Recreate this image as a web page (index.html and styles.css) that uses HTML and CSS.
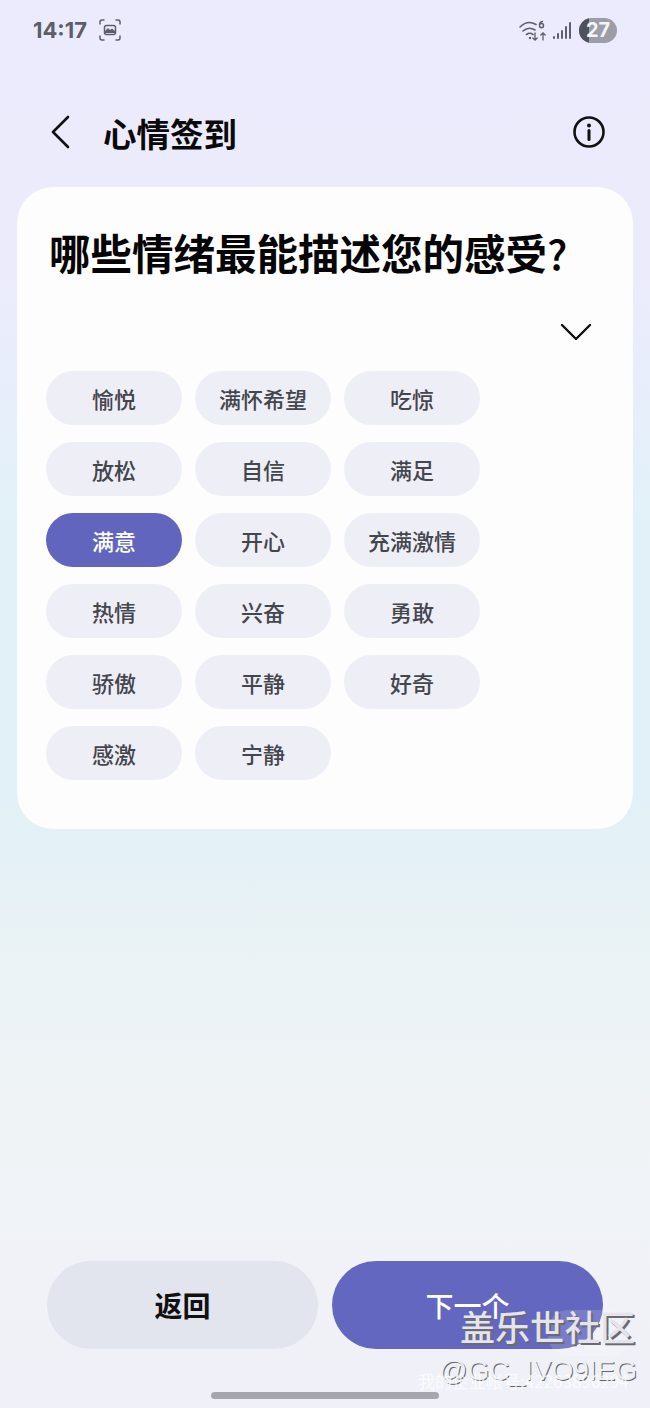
FILE: index.html
```html
<!DOCTYPE html>
<html lang="zh-CN">
<head>
<meta charset="utf-8">
<title>心情签到</title>
<link rel="stylesheet" href="styles.css">
</head>
<body>
<div class="screen">
  <div class="status">
    <div class="status-left">
      <span class="time">14:17</span>
      <svg class="shot" width="22" height="22" viewBox="0 0 22 22" fill="none" stroke="#5c5f6b" stroke-width="1.5" stroke-linecap="round">
        <path d="M1 5V3a2 2 0 0 1 2-2h2M17 1h2a2 2 0 0 1 2 2v2M21 17v2a2 2 0 0 1-2 2h-2M5 21H3a2 2 0 0 1-2-2v-2"/>
        <rect x="5.5" y="6.5" width="11" height="9" rx="2"/>
        <path d="M6 12l3-3 2 2 2-1.500 3 2.500v2H6z" fill="#5c5f6b" stroke="none"/>
      </svg>
    </div>
    <div class="status-right">
      <svg class="wifi" width="28" height="22" viewBox="0 0 28 22" fill="none" stroke="#5c5f6b" stroke-width="1.6" stroke-linecap="round">
        <path d="M1 7c5-5 11-5.500 16-2.500M4 11c4-3.500 8-3.500 12-1M7.500 14.500c2-1.500 4.500-1.500 6.500 0"/>
        <circle cx="11" cy="18" r="1.200" fill="#5c5f6b" stroke="none"/>
        <path d="M16 13v7M13.800 18l2.200 2.200 2.200-2.200M24 20v-7M21.800 15l2.200-2.200 2.200 2.200" stroke-width="1.300"/>
        <path d="M23.500 1.500c-2 .2-3 1.700-3 3.800 0 1.500.8 2.500 2 2.500s2-1 2-2.200-.8-2-2-2-1.700.6-2 1.300" stroke-width="1.500"/>
      </svg>
      <svg class="signal" width="18" height="17" viewBox="0 0 18 17" fill="#5c5f6b">
        <rect x="0" y="14" width="2" height="3" rx="1"/>
        <rect x="4" y="11" width="2" height="6" rx="1"/>
        <rect x="8" y="8" width="2" height="9" rx="1"/>
        <rect x="12" y="4" width="2" height="13" rx="1"/>
        <rect x="16" y="0" width="2" height="17" rx="1"/>
      </svg>
      <div class="battery"><span class="battery-fill"></span><span class="battery-num">27</span></div>
    </div>
  </div>

  <header class="topbar">
    <div class="topbar-left">
      <svg class="back" width="20" height="34" viewBox="0 0 20 34" fill="none" stroke="#111" stroke-width="2.600" stroke-linecap="round" stroke-linejoin="round">
        <path d="M18 2L3 17l15 15"/>
      </svg>
      <h1 class="title">心情签到</h1>
    </div>
    <svg class="info" width="32" height="32" viewBox="0 0 32 32" fill="none" stroke="#111" stroke-width="2.600" stroke-linecap="round">
      <circle cx="16" cy="16" r="14.500"/>
      <path d="M16 14.500v9" stroke-width="3"/>
      <circle cx="16" cy="9.500" r="2" fill="#111" stroke="none"/>
    </svg>
  </header>

  <main class="card">
    <h2 class="question">哪些情绪最能描述您的感受<span class="q-mark">?</span></h2>
    <div class="chev-row">
      <svg width="32" height="18" viewBox="0 0 32 18" fill="none" stroke="#111" stroke-width="2.400" stroke-linecap="round" stroke-linejoin="round">
        <path d="M2 2l14 14L30 2"/>
      </svg>
    </div>
    <div class="chips">
      <span class="chip">愉悦</span><span class="chip">满怀希望</span><span class="chip">吃惊</span>
      <span class="chip">放松</span><span class="chip">自信</span><span class="chip">满足</span>
      <span class="chip chip-on">满意</span><span class="chip">开心</span><span class="chip">充满激情</span>
      <span class="chip">热情</span><span class="chip">兴奋</span><span class="chip">勇敢</span>
      <span class="chip">骄傲</span><span class="chip">平静</span><span class="chip">好奇</span>
      <span class="chip">感激</span><span class="chip">宁静</span>
    </div>
  </main>

  <footer class="actions">
    <button class="btn btn-back">返回</button>
    <button class="btn btn-next">下一个</button>
  </footer>
  <div class="home-row"><span class="home-bar"></span></div>

  <div class="wm-blob"></div>
  <div class="wm-site">盖乐世社区</div>
  <div class="wm-user">@GC_IVO9IEG</div>
  <div class="wm-id">我的企业帐号:42263896294</div>
</div>
</body>
</html>
```
FILE: styles.css
```css
* { box-sizing: border-box; margin: 0; padding: 0; }
html, body { width: 650px; height: 1408px; overflow: hidden; }
body { font-family: "Noto Sans CJK SC", "Noto Sans", sans-serif; }

.screen {
  position: relative;
  width: 650px;
  height: 1408px;
  display: flex;
  flex-direction: column;
  background: linear-gradient(180deg, #ecebfd 0, #ebebfc 280px, #e2f1f8 520px, #e2f1f7 800px, #e9f2f5 940px, #eff3f6 1110px, #f0f2f7 1300px, #f0f0f8 1408px);
}

.status {
  height: 60px;
  padding: 18px 33px 0 33px;
  display: flex;
  justify-content: space-between;
  align-items: flex-start;
}
.status-left { display: flex; align-items: center; gap: 12px; }
.time {
  font-family: Inter, "Noto Sans", sans-serif;
  font-weight: 700;
  font-size: 22px;
  line-height: 24px;
  color: #5c5f6b;
}
.shot { display: block; }
.status-right { display: flex; align-items: center; }
.wifi { display: block; margin-right: 6px; }
.signal { display: block; margin-right: 8px; }
.battery {
  position: relative;
  width: 38px;
  height: 25px;
  border-radius: 13px;
  background: #9c9da8;
  overflow: hidden;
  text-align: center;
}
.battery-fill {
  position: absolute;
  left: 0; top: 0; bottom: 0;
  width: 10px;
  background: #4f515c;
}
.battery-num {
  position: relative;
  font-family: Inter, sans-serif;
  font-weight: 700;
  font-size: 20px;
  line-height: 25px;
  color: #f3f3f8;
}

.topbar {
  height: 67px;
  margin-top: 39px;
  padding: 0 45px 0 50px;
  display: flex;
  align-items: center;
  justify-content: space-between;
}
.topbar-left { display: flex; align-items: center; gap: 33px; }
.back { display: block; margin-bottom: 1px; }
.title { font-size: 33.5px; line-height: 44px; font-weight: 700; color: #0a0a0a; }
.info { display: block; margin-bottom: 1px; }

.card {
  margin: 21px 17px 0;
  height: 642px;
  background: #fdfdfe;
  border-radius: 36px;
  padding: 35px 29px 0;
}
.question {
  font-size: 41.500px;
  line-height: 60px;
  font-weight: 700;
  color: #050505;
  padding-left: 3px;
  white-space: nowrap;
}
.q-mark { font-weight: 500; }
.chev-row { display: flex; justify-content: flex-end; padding: 41px 12px 0 0; height: 89px; }
.chips {
  display: grid;
  grid-template-columns: repeat(3, 136px);
  grid-auto-rows: 54px;
  column-gap: 13px;
  row-gap: 17px;
}
.chip {
  border-radius: 27px;
  background: #eeeef6;
  color: #44464e;
  font-size: 22px;
  font-weight: 500;
  display: flex;
  align-items: center;
  justify-content: center;
}
.chip-on { background: #6265bd; color: #fff; }

.actions {
  margin-top: 432px;
  padding: 0 47px;
  display: flex;
  gap: 14px;
}
.btn {
  width: 271px;
  height: 88px;
  border: 0;
  border-radius: 44px;
  font-family: inherit;
  font-size: 28px;
  font-weight: 700;
}
.btn-back { background: #e2e4ee; color: #111; }
.btn-next { background: #6367bf; color: #fff; font-weight: 500; }

.home-row { display: flex; justify-content: center; margin-top: 43px; }
.home-bar { width: 228px; height: 7px; border-radius: 4px; background: #a6a6ae; }

.wm-blob {
  position: absolute;
  left: 548px; top: 1310px;
  width: 82px; height: 46px;
  border-radius: 20px;
  background: rgba(255, 255, 255, 0.14);
}
.wm-site {
  position: absolute;
  left: 460px; top: 1304px;
  font-size: 35px;
  line-height: 44px;
  font-weight: 500;
  color: #e4e4ec;
  text-shadow: 2px 2px 0 #6a6a72;
  white-space: nowrap;
}
.wm-user {
  position: absolute;
  left: 439px; top: 1353px;
  font-family: "Liberation Sans", Arial, sans-serif;
  font-size: 28px;
  line-height: 36px;
  color: #f0f0f4;
  text-shadow: 1px 1px 0 #66666e;
  white-space: nowrap;
}
.wm-id {
  position: absolute;
  left: 418px; top: 1370px;
  font-size: 17px;
  line-height: 22px;
  color: rgba(255, 255, 255, 0.75);
  white-space: nowrap;
}
```
